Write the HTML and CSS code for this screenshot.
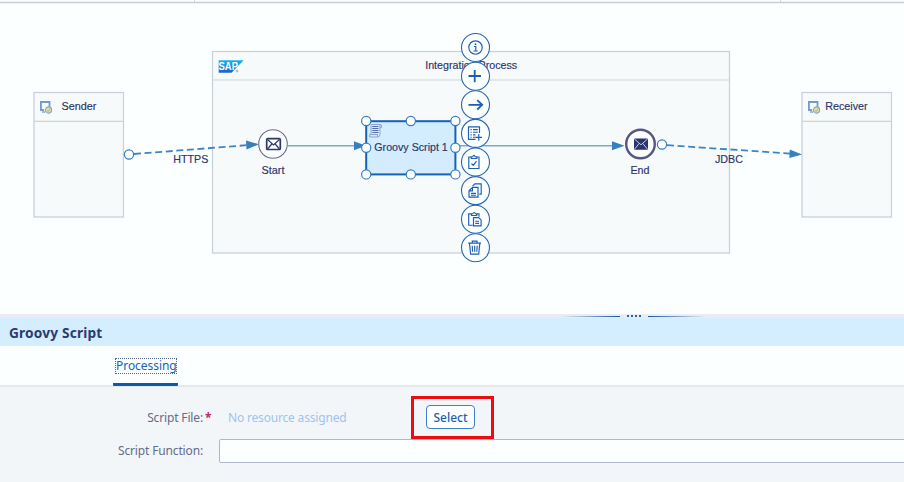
FILE: index.html
```html
<!DOCTYPE html>
<html lang="en">
<head>
<meta charset="utf-8">
<title>Integration Flow</title>
<link rel="stylesheet" href="styles.css">
</head>
<body>
<main class="editor">
<svg class="canvas" width="904" height="314" viewBox="0 0 904 314">
  <defs>
    <linearGradient id="sap" x1="0" y1="0" x2="0" y2="1"><stop offset="0" stop-color="#16b4ee"/><stop offset="1" stop-color="#1d60c2"/></linearGradient>
    <g id="participant">
      <path d="M4 9H0.9V1H9.5V6" fill="none" stroke="#6f9bd0" stroke-width="1.8"/>
      <path d="M2 11H5" stroke="#8aa6cc" stroke-width="1.5"/>
      <circle cx="8.5" cy="9" r="3.1" fill="#d9dfaa" stroke="#8ca4b8" stroke-width="1.1"/>
      <path d="M7 9.5L8.5 10.3L10 7.8" fill="none" stroke="#a4ae70" stroke-width=".8"/>
    </g>
    <g id="handle"><circle r="4.6" class="handle"/></g>
    <g id="ring"><circle r="14" class="ring"/></g>
  </defs>
  <path d="M0 2.5H904" stroke="#c6cbd6" stroke-width="1.6"/>
  <path d="M194.5 0V2M780.5 0V2" stroke="#d3d8df"/>

  <rect class="pool" x="212.5" y="51.5" width="517" height="201.500"/>
  <path class="pool-line" d="M212.500 80H729.500"/>
  <rect class="pool" x="34" y="92.500" width="89.500" height="124.500"/>
  <path class="pool-line" d="M34 121.300H123.500"/>
  <rect class="pool" x="802" y="92.500" width="89.500" height="124.500"/>
  <path class="pool-line" d="M802 121.300H891.500"/>

  <path d="M218.700 60.300H243.700L231.500 72.800H218.700Z" fill="url(#sap)"/>
  <text class="logo" x="218.500" y="70.400" textLength="19.500" lengthAdjust="spacingAndGlyphs">SAP</text>
  <circle cx="237" cy="71" r="1" fill="none" stroke="#5b93dc" stroke-width=".6"/>
  <use href="#participant" x="40" y="101"/>
  <use href="#participant" x="808" y="101"/>
  <text class="label" x="61.500" y="110.300" textLength="35" lengthAdjust="spacingAndGlyphs">Sender</text>
  <text class="label" x="825.200" y="110.300" textLength="42.500" lengthAdjust="spacingAndGlyphs">Receiver</text>
  <text class="label" x="425.200" y="69.300" textLength="92" lengthAdjust="spacingAndGlyphs">Integration Process</text>

  <path class="message" d="M134 154L247 145.200"/>
  <path class="arrow" d="M246 140.500L259 144.300L246.500 149.500Z"/>
  <use href="#handle" x="129" y="154.500"/>
  <text class="label" x="173.300" y="163.300" textLength="35" lengthAdjust="spacingAndGlyphs">HTTPS</text>

  <path class="flow" d="M288 145.800H355M456 145.800H613"/>
  <path class="arrow" d="M354 141.300L366 145.800L354 150.300ZM612 141.300L624.500 145.800L612 150.300Z"/>

  <circle cx="273" cy="144" r="14.300" fill="#fcfeff" stroke="#6b6c8d" stroke-width="1.100"/>
  <rect x="266.700" y="138.700" width="13.600" height="10.800" rx="1" fill="#fff" stroke="#2f386d" stroke-width="1.700"/>
  <path d="M267.500 139.500L273.500 145L279.500 139.500M267.500 149L271.800 144M279.500 149L275.200 144" fill="none" stroke="#2f386d" stroke-width="1.200"/>
  <text class="label" x="261.500" y="173.600" textLength="23" lengthAdjust="spacingAndGlyphs">Start</text>

  <path class="message" d="M667 145.200L791 153.600"/>
  <path class="arrow" d="M789.800 149.500L802 154.600L789.300 158Z"/>
  <circle cx="640.500" cy="144" r="14.300" fill="#fcfeff" stroke="#545780" stroke-width="2.400"/>
  <rect x="634" y="138.400" width="14" height="11.400" rx="1" fill="#2a356d"/>
  <path d="M634.500 139L641 144.800L647.500 139M634.500 149.300L639.300 143.300M647.500 149.300L642.700 143.300" fill="none" stroke="#c6cce4"/>
  <use href="#handle" x="662" y="144.500"/>
  <text class="label" x="630.500" y="173.600" textLength="19" lengthAdjust="spacingAndGlyphs">End</text>
  <text class="label" x="715" y="163.300" textLength="28" lengthAdjust="spacingAndGlyphs">JDBC</text>

  <rect x="366.200" y="121.200" width="89.200" height="53.200" fill="#d3edff" stroke="#1762b5" stroke-width="2"/>
  <path d="M371 124.500H380V134.500Q380 137 377.500 137H369.500Q368.500 135 371 134.500Z" fill="#dce6f7" stroke="#8fa6cc"/>
  <path d="M380 124.500Q382 124 381.500 127.500H380M369.500 134.500H377.500V137" fill="none" stroke="#8fa6cc"/>
  <path d="M372.300 126.500H378.500M372.300 128.500H378.500M372.300 130.500H378.500M372.300 132.500H378.500" stroke="#526fae" stroke-width="1.200"/>
  <text class="label" x="374.300" y="150.600" textLength="73.500" lengthAdjust="spacingAndGlyphs">Groovy Script 1</text>
  <use href="#handle" x="366.200" y="121"/><use href="#handle" x="410.800" y="121"/><use href="#handle" x="455.400" y="121"/>
  <use href="#handle" x="366.200" y="147.700"/><use href="#handle" x="455.400" y="147.700"/>
  <use href="#handle" x="366.200" y="174.400"/><use href="#handle" x="410.800" y="174.400"/><use href="#handle" x="455.400" y="174.400"/>

  <g class="tool" transform="translate(475.500 47.500)"><use href="#ring"/><circle r="6.700"/><path d="M-1.500 -1H.3V3.500M-2 3.500H2.200"/><circle cx="0" cy="-3.300" r=".9" class="solid"/></g>
  <g class="tool" transform="translate(475.500 76.200)"><use href="#ring"/><path class="bold" d="M-7 -.2H5.500M-.8 -6.300V6"/></g>
  <g class="tool" transform="translate(475.500 104.800)"><use href="#ring"/><path class="bold" d="M-7 0H6.500M1.700 -4.700L6.700 0L1.700 4.700"/></g>
  <g class="tool" transform="translate(475.500 133.400)"><use href="#ring"/><path d="M4 -.5V-6.500H-7V6H0M-5 -3.800H-3.800M-2.500 -3.800H2.300M-5 -1.200H-3.800M-2.500 -1.200H2.300M-5 1.400H-3.800M-2.500 1.400H0M-5 3.800H-3.800M-2.500 3.800H0"/><path d="M3.300 .7V7.300M0 4H6.600"/></g>
  <g class="tool" transform="translate(475.500 162)"><use href="#ring"/><path d="M-4 -5H-6.700V6.500H3.500V-5H1.200M-4.300 -3.500V-5.300H-2.800Q-1.500 -8 -.3 -5.300H1.300V-3.500ZM-4 1.500L-2.200 3.300L1 -.8"/></g>
  <g class="tool" transform="translate(475.500 190.600)"><use href="#ring"/><path d="M-3 -3.300L-6.500 .2V6.500H2.500V-3.300ZM-3 -3V.2H-6M-4.500 2.700H.5M-4.500 4.600H.5M-3 -4.500L-.7 -6.700H5.700V3.500H3.700"/></g>
  <g class="tool" transform="translate(475.500 219.200)"><use href="#ring"/><path d="M-3.700 -5.300H-6.800V6H-2.800M1 -5.300H3.500V-2.500M-4 -3.700V-5.500H-2.700Q-1.400 -8 -.1 -5.500H1.200V-3.700ZM-2 -1.600H3.200L5.600 .7V6.600H-2ZM-.2 2H3.500M-.2 4.200H3.500"/></g>
  <g class="tool" transform="translate(475.500 247.800)"><use href="#ring"/><path d="M-7.300 -4.700H5.500M-3.200 -5V-6.700H1.500V-5M-6 -4.300L-4.900 6.300H3.200L4.300 -4.300M-3.300 -2L-2.900 4M-.8 -2V4M1.700 -2L1.300 4"/></g>
</svg>

<div class="splitter"><i class="rule left"></i><span class="grip"><i></i><i></i><i></i><i></i></span><i class="rule right"></i></div>
<section class="properties">
  <h1>Groovy Script</h1>
  <nav class="tabs"><a class="tab"><span>Processing</span></a></nav>
  <form class="form">
    <div class="row file">
      <label>Script File:<b>*</b></label>
      <span class="hint">No resource assigned</span>
      <div class="highlight"><button type="button">Select</button></div>
    </div>
    <div class="row function"><label>Script Function:</label><input aria-label="Script Function"></div>
  </form>
</section>
</main>
</body>
</html>
```
FILE: styles.css
```css
* { box-sizing: border-box; }
body { margin: 0; overflow: hidden; background: #fbffff; font-family: "Noto Sans", sans-serif; }
.editor { width: 904px; height: 482px; display: flex; flex-direction: column; overflow: hidden; }
.canvas { display: block; flex: none; background: #fbffff; }
.pool { fill: #f6fafb; stroke: #c9ced8; stroke-width: 1.2; }
.pool-line { stroke: #ced3dc; stroke-width: 1.2; }
.label { font: 11px "Liberation Sans", sans-serif; fill: #2b3368; stroke: #2b3368; stroke-width: .15px; }
.logo { font: bold 10px "Liberation Sans", sans-serif; fill: #fff; }
.handle { fill: #fff; stroke: #347dc1; stroke-width: 1.2; }
.message { stroke: #3d85bf; stroke-width: 1.8; stroke-dasharray: 7 3.6; }
.flow { fill: none; stroke: #76a9d6; stroke-width: 1.4; }
.arrow { fill: #377fbe; }
.ring { fill: #fbffff; stroke: #2866af; stroke-width: 1.1; }
.tool { fill: none; stroke: #1d5eb0; stroke-width: 1.15; }
.tool .bold { stroke-width: 1.8; }
.tool .solid { fill: #1d5eb0; stroke: none; }
.splitter { height: 4px; flex: none; display: flex; align-items: center; padding-left: 562px; background: #e9ecf2; }
.rule { width: 58px; height: 1px; }
.left { background: linear-gradient(90deg, transparent, #1453a0); }
.right { background: linear-gradient(270deg, transparent, #1453a0); }
.grip { display: flex; gap: 2px; margin: 0 7px; }
.grip i { width: 2px; height: 2px; background: #2467ad; }
.properties { flex: 1; display: flex; flex-direction: column; }
h1 { height: 28px; margin: 0; padding-left: 9px; font-size: 13.7px; letter-spacing: .17px; line-height: 29px; color: #2b3c70; background: #d4edff; }
.tabs { height: 41px; padding-left: 113px; display: flex; border-bottom: 2px solid #e5e9ec; }
.tab { width: 65px; height: 40px; padding: 12px 0 0 2px; border-bottom: 3px solid #0958b3; border-radius: 1px; color: #1763b5; font-size: 12px; line-height: 16px; }
.tab span { display: block; width: 62px; height: 16px; padding-left: 1px; outline: 1px dotted #53678c; outline-offset: -1px; white-space: nowrap; letter-spacing: -.05px; }
.form { flex: 1; background: #f3f6f8; color: #656b8b; font-size: 12px; letter-spacing: -.15px; }
.row { display: flex; align-items: center; }
.file { height: 51px; padding-top: 10px; }
label { width: 203px; text-align: right; white-space: nowrap; }
label b { display: inline-block; width: 0; color: #c52757; text-indent: 2px; }
.hint { width: 183px; margin-left: 25px; color: #9fc3ef; letter-spacing: -.18px; }
.highlight { width: 83px; height: 43px; display: flex; align-items: center; padding-left: 12px; border: 3px solid #ee0b0f; margin-top: -1px; }
button { width: 49px; height: 24px; padding: 0; border: 1px solid #3f7fc6; border-radius: 4px; background: #fbffff; color: #1d60b0; font: 500 12px "Noto Sans", sans-serif; }
.function { height: 25px; }
input { height: 24px; flex: 1; margin: 0 -4px 0 16px; border: 1px solid #b0b7cc; border-radius: 2px; background: #fbffff; }
```
